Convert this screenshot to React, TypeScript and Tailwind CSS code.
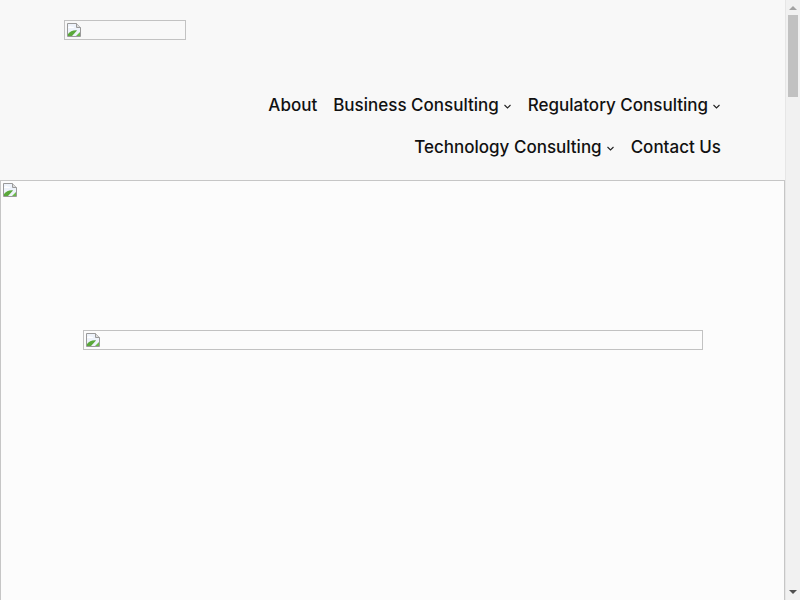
import React from "react";

const navRows = [
  [
    { name: "About", sub: false },
    { name: "Business Consulting", sub: true },
    { name: "Regulatory Consulting", sub: true },
  ],
  [
    { name: "Technology Consulting", sub: true },
    { name: "Contact Us", sub: false },
  ],
];

const BrokenIcon: React.FC = () => (
  <svg width="16" height="16" viewBox="0 0 16 16" className="shrink-0">
    <path d="M1.5 1.5h9l4 4v9h-13z" fill="#eef3fb" stroke="#9a9a9a" />
    <path d="M10.5 1.5v4h4" fill="#dcdcdc" stroke="#9a9a9a" />
    <path d="M2 5.5c1-1.5 3-1.8 4-.6 1-.4 2 .2 2 1.1H2z" fill="#ffffff" />
    <path d="M2 14V12c2-2.5 5-4 9-3.6L6 14z" fill="#5aa83a" />
    <path d="M10 14l4-4v4z" fill="#6bb84a" />
  </svg>
);

const BrokenImage: React.FC<{ className?: string }> = ({ className = "" }) => (
  <div className={`border border-[#c2c2c2] ${className}`}>
    <div className="pl-[1px] pt-[1px]">
      <BrokenIcon />
    </div>
  </div>
);

const Chevron: React.FC = () => (
  <svg width="9" height="9" viewBox="0 0 9 9" className="ml-[4px] mt-[3px]">
    <path d="M1.5 3l3 3 3-3" fill="none" stroke="#222" strokeWidth="1.1" />
  </svg>
);

const Scrollbar: React.FC = () => (
  <div className="w-[15px] shrink-0 bg-[#f1f1f1] border-l border-[#e6e6e6] flex flex-col">
    <div className="h-[15px] flex items-center justify-center">
      <svg width="8" height="5" viewBox="0 0 8 5">
        <path d="M0 5L4 1l4 4z" fill="#a3a3a3" />
      </svg>
    </div>
    <div className="mx-[2px] h-[82px] bg-[#c1c1c1]" />
    <div className="flex-1" />
    <div className="h-[15px] flex items-center justify-center">
      <svg width="8" height="5" viewBox="0 0 8 5">
        <path d="M0 0l4 4 4-4z" fill="#505050" />
      </svg>
    </div>
  </div>
);

const App: React.FC = () => {
  return (
    <div className="h-[600px] overflow-hidden flex font-['Inter',sans-serif] text-[#111]">
      <div className="flex-1 min-w-0 bg-[#fcfcfc]">
        <header className="bg-[#f8f8f8] px-16 pt-5 pb-5">
          <BrokenImage className="w-[122px] h-5" />
          <nav className="mt-[52px] flex flex-col items-end gap-y-4">
            {navRows.map((row, i) => (
              <div key={i} className="flex items-center gap-x-4">
                {row.map((link) => (
                  <a
                    key={link.name}
                    href="#"
                    className="flex items-center text-[17px] font-medium leading-[26px]"
                  >
                    {link.name}
                    {link.sub && <Chevron />}
                  </a>
                ))}
              </div>
            ))}
          </nav>
        </header>
        <section className="border border-[#c6c6c6] h-[3990px] flex flex-col">
          <div className="pl-[1px] pt-[1px]">
            <BrokenIcon />
          </div>
          <div className="flex justify-center pt-[132px]">
            <BrokenImage className="w-[620px] h-5" />
          </div>
        </section>
      </div>
      <Scrollbar />
    </div>
  );
};

export default App;
